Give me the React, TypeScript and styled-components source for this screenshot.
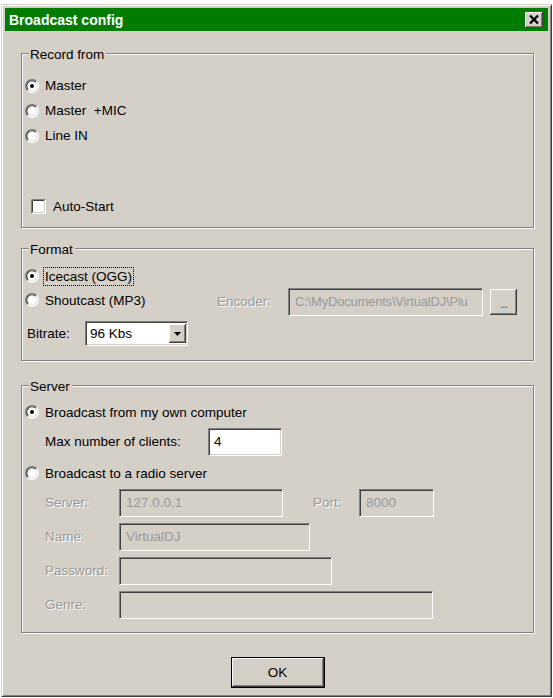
import React from 'react';
import styled, { createGlobalStyle } from 'styled-components';

const GlobalStyle = createGlobalStyle`
  html, body {
    margin: 0;
    padding: 0;
    background: #ffffff;
  }
  body {
    font-family: "Liberation Sans", Arial, sans-serif;
    font-size: 13.5px;
    color: #000;
  }
`;

const Window = styled.div`
  box-sizing: border-box;
  width: 551px;
  height: 693px;
  margin: 4px 0 0 1px;
  padding: 3px;
  background: #d4d0c8;
  border: 1px solid;
  border-color: #d4d0c8 #404040 #404040 #d4d0c8;
  box-shadow: inset 1px 1px #fff, inset -1px -1px #808080;
  display: flex;
  flex-direction: column;
  overflow: hidden;
`;

const TitleBar = styled.div`
  height: 23px;
  flex: none;
  display: flex;
  align-items: center;
  padding: 0 5px 0 4px;
  background: #007d00;
`;

const Title = styled.div`
  flex: 1;
  color: #fff;
  font-weight: bold;
  font-size: 14px;
  line-height: 16px;
`;

const CloseButton = styled.div`
  box-sizing: border-box;
  width: 18px;
  height: 16px;
  display: flex;
  align-items: center;
  justify-content: center;
  background: #d4d0c8;
  box-shadow: inset -1px -1px #404040, inset 1px 1px #fff, inset -2px -2px #808080;
`;

const Body = styled.div`
  flex: 1;
  display: flex;
  flex-direction: column;
  padding: 22px 14px 0 16px;
`;

const Group = styled.div<{ $pad: string; $mt?: number }>`
  position: relative;
  box-sizing: border-box;
  border: 1px solid #808080;
  box-shadow: inset 1px 1px #fff, 1px 1px #fff;
  padding: ${({ $pad }) => $pad};
  margin-top: ${({ $mt }) => $mt ?? 0}px;
  display: flex;
  flex-direction: column;
`;

const Legend = styled.span`
  position: absolute;
  top: -7px;
  left: 7px;
  padding: 0 2px 0 1px;
  line-height: 16px;
  background: #d4d0c8;
`;

const OptionRow = styled.div<{ $mt?: number; $h?: number; $left?: number }>`
  height: ${({ $h }) => $h ?? 25}px;
  margin-top: ${({ $mt }) => $mt ?? 0}px;
  padding-left: ${({ $left }) => $left ?? 3}px;
  display: flex;
  align-items: center;
  flex: none;
`;

const OptionText = styled.span<{ $focus?: boolean; $gap?: number }>`
  margin-left: ${({ $gap }) => $gap ?? 4}px;
  padding: 1px 1px 0;
  line-height: 16px;
  border: 1px dotted ${({ $focus }) => ($focus ? '#000' : 'transparent')};
  white-space: nowrap;
`;

const FieldRow = styled.div<{ $mt?: number; $left?: number }>`
  height: 28px;
  margin-top: ${({ $mt }) => $mt ?? 0}px;
  padding-left: ${({ $left }) => $left ?? 23}px;
  display: flex;
  align-items: center;
  flex: none;
`;

const Label = styled.span<{ $w: number; $disabled?: boolean; $ml?: number }>`
  width: ${({ $w }) => $w}px;
  margin-left: ${({ $ml }) => $ml ?? 0}px;
  flex: none;
  line-height: 16px;
  white-space: nowrap;
  color: ${({ $disabled }) => ($disabled ? '#999' : '#000')};
  text-shadow: ${({ $disabled }) => ($disabled ? '1px 1px #fff' : 'none')};
`;

const Field = styled.div<{ $w: number; $disabled?: boolean }>`
  box-sizing: border-box;
  width: ${({ $w }) => $w}px;
  height: 28px;
  flex: none;
  padding-left: ${({ $disabled }) => ($disabled ? 6 : 5)}px;
  display: flex;
  align-items: center;
  overflow: hidden;
  white-space: nowrap;
  line-height: 16px;
  background: ${({ $disabled }) => ($disabled ? '#d4d0c8' : '#fff')};
  color: ${({ $disabled }) => ($disabled ? '#9a9a9a' : '#000')};
  border: 1px solid;
  border-color: #808080 #fff #fff #808080;
  box-shadow: inset 1px 1px #404040, inset -1px -1px #d4d0c8;
`;

const PathText = styled.span`
  font-size: 13px;
  letter-spacing: -0.2px;
`;

const EncoderBox = styled.div`
  margin-left: auto;
  margin-right: 16px;
  display: flex;
  align-items: center;
  gap: 7px;
`;

const EncoderLabelWrap = styled.div`
  display: flex;
  align-items: center;
`;

const SmallButton = styled.div`
  box-sizing: border-box;
  width: 27px;
  height: 26px;
  flex: none;
  display: flex;
  align-items: flex-end;
  justify-content: center;
  padding-bottom: 6px;
  background: #d4d0c8;
  color: #666;
  font-size: 12px;
  line-height: 10px;
  letter-spacing: -1px;
  box-shadow: inset -1px -1px #404040, inset 1px 1px #fff, inset -2px -2px #808080;
`;

const Select = styled.div`
  box-sizing: border-box;
  width: 103px;
  height: 25px;
  flex: none;
  display: flex;
  align-items: stretch;
  padding: 2px 1px 2px 2px;
  background: #fff;
  border: 1px solid;
  border-color: #808080 #fff #fff #808080;
  box-shadow: inset 1px 1px #404040, inset -1px -1px #d4d0c8;
`;

const SelectValue = styled.span`
  flex: 1;
  display: flex;
  align-items: center;
  padding-left: 2px;
  line-height: 16px;
`;

const SelectButton = styled.div`
  box-sizing: border-box;
  width: 17px;
  flex: none;
  display: flex;
  align-items: center;
  justify-content: center;
  background: #d4d0c8;
  box-shadow: inset -1px -1px #404040, inset 1px 1px #fff, inset -2px -2px #808080;
`;

const Footer = styled.div`
  display: flex;
  justify-content: center;
  margin-top: 24px;
`;

const OkButton = styled.div`
  box-sizing: border-box;
  width: 94px;
  height: 31px;
  display: flex;
  align-items: center;
  justify-content: center;
  line-height: 16px;
  background: #d4d0c8;
  border: 1px solid #000;
  box-shadow: inset -1px -1px #404040, inset 1px 1px #fff, inset -2px -2px #808080;
`;

const Radio: React.FC<{ checked?: boolean }> = ({ checked }) => (
  <svg width="14" height="14" viewBox="0 0 12 12" style={{ flex: 'none' }}>
    <circle cx="6" cy="6" r="4.6" fill="#fff" />
    <path d="M2.1 9.9 A5.5 5.5 0 0 1 9.9 2.1" fill="none" stroke="#808080" strokeWidth="1" />
    <path d="M9.9 2.1 A5.5 5.5 0 0 1 2.1 9.9" fill="none" stroke="#fff" strokeWidth="1" />
    <path d="M2.8 9.2 A4.5 4.5 0 0 1 9.2 2.8" fill="none" stroke="#404040" strokeWidth="1" />
    <path d="M9.2 2.8 A4.5 4.5 0 0 1 2.8 9.2" fill="none" stroke="#e8e6e1" strokeWidth="1" />
    {checked && <circle cx="6" cy="6" r="1.7" fill="#000" />}
  </svg>
);

const Checkbox: React.FC = () => (
  <svg width="15" height="15" viewBox="0 0 15 15" style={{ flex: 'none' }}>
    <rect x="0" y="0" width="15" height="15" fill="#fff" />
    <path d="M0.5 14.5 V0.5 H14.5" fill="none" stroke="#808080" />
    <path d="M1.5 13.5 V1.5 H13.5" fill="none" stroke="#404040" />
    <path d="M1.5 13.5 H13.5 V1.5" fill="none" stroke="#d4d0c8" />
  </svg>
);

const Arrow: React.FC = () => (
  <svg width="7" height="4" viewBox="0 0 7 4">
    <path d="M0 0 H7 L3.5 4 Z" fill="#000" />
  </svg>
);

const CloseX: React.FC = () => (
  <svg width="10" height="9" viewBox="0 0 10 9">
    <path d="M1 0.5 L9 8.5 M9 0.5 L1 8.5" stroke="#000" strokeWidth="2.2" />
  </svg>
);

const App: React.FC = () => (
  <>
    <GlobalStyle />
    <Window>
      <TitleBar>
        <Title>Broadcast config</Title>
        <CloseButton>
          <CloseX />
        </CloseButton>
      </TitleBar>
      <Body>
        <Group $pad="19px 0 8px">
          <Legend>Record from</Legend>
          <OptionRow>
            <Radio checked />
            <OptionText>Master</OptionText>
          </OptionRow>
          <OptionRow>
            <Radio />
            <OptionText>Master&nbsp;&nbsp;+MIC</OptionText>
          </OptionRow>
          <OptionRow>
            <Radio />
            <OptionText>Line IN</OptionText>
          </OptionRow>
          <OptionRow $mt={46} $left={9}>
            <Checkbox />
            <OptionText $gap={5}>Auto-Start</OptionText>
          </OptionRow>
        </Group>

        <Group $pad="15px 0 14px" $mt={20}>
          <Legend>Format</Legend>
          <OptionRow $h={24}>
            <Radio checked />
            <OptionText $focus>Icecast (OGG)</OptionText>
          </OptionRow>
          <FieldRow $left={0}>
            <OptionRow $h={24} style={{ alignSelf: 'flex-start' }}>
              <Radio />
              <OptionText>Shoutcast (MP3)</OptionText>
            </OptionRow>
            <EncoderBox>
              <EncoderLabelWrap>
                <Label $w={71} $disabled>
                  Encoder:
                </Label>
                <Field $w={195} $disabled>
                  <PathText>C:\MyDocuments\VirtualDJ\Plu</PathText>
                </Field>
              </EncoderLabelWrap>
              <SmallButton>...</SmallButton>
            </EncoderBox>
          </FieldRow>
          <OptionRow $h={25} $mt={5} $left={5}>
            <Label $w={58}>Bitrate:</Label>
            <Select>
              <SelectValue>96 Kbs</SelectValue>
              <SelectButton>
                <Arrow />
              </SelectButton>
            </Select>
          </OptionRow>
        </Group>

        <Group $pad="14px 0 13px" $mt={24}>
          <Legend>Server</Legend>
          <OptionRow $h={24}>
            <Radio checked />
            <OptionText>Broadcast from my own computer</OptionText>
          </OptionRow>
          <FieldRow $mt={4}>
            <Label $w={163}>Max number of clients:</Label>
            <Field $w={74}>4</Field>
          </FieldRow>
          <OptionRow $h={24} $mt={5}>
            <Radio />
            <OptionText>Broadcast to a radio server</OptionText>
          </OptionRow>
          <FieldRow $mt={4}>
            <Label $w={74} $disabled>
              Server:
            </Label>
            <Field $w={164} $disabled>
              127.0.0.1
            </Field>
            <Label $w={46} $ml={30} $disabled>
              Port:
            </Label>
            <Field $w={75} $disabled>
              8000
            </Field>
          </FieldRow>
          <FieldRow $mt={6}>
            <Label $w={74} $disabled>
              Name:
            </Label>
            <Field $w={191} $disabled>
              VirtualDJ
            </Field>
          </FieldRow>
          <FieldRow $mt={6}>
            <Label $w={74} $disabled>
              Password:
            </Label>
            <Field $w={213} $disabled />
          </FieldRow>
          <FieldRow $mt={6}>
            <Label $w={74} $disabled>
              Genre:
            </Label>
            <Field $w={314} $disabled />
          </FieldRow>
        </Group>

        <Footer>
          <OkButton>OK</OkButton>
        </Footer>
      </Body>
    </Window>
  </>
);

export default App;
